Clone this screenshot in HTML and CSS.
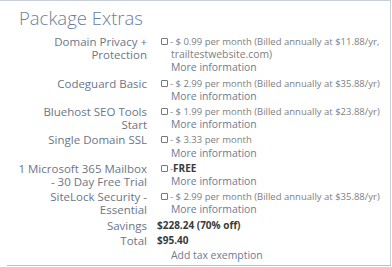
FILE: index.html
```html
<!DOCTYPE html>
<html lang="en">

<head>
    <meta charset="UTF-8" />
    <title>Package Extras</title>
    <link rel="stylesheet" href="styles.css">
</head>

<body>
    <div class="panel">
        <h2>Package Extras</h2>

        <div class="extras">
            <div class="label">Domain Privacy +<br>Protection</div>
            <div class="value">
                <span class="box"></span>- $ 0.99 per month (Billed annually at $11.88/yr,
                <div class="sub">trailtestwebsite.com)</div>
                <a class="sub more" href="#">More information</a>
            </div>

            <div class="label">Codeguard Basic</div>
            <div class="value">
                <span class="box"></span>- $ 2.99 per month (Billed annually at $35.88/yr)
                <a class="sub more" href="#">More information</a>
            </div>

            <div class="label">Bluehost SEO Tools<br>Start</div>
            <div class="value">
                <span class="box"></span>- $ 1.99 per month (Billed annually at $23.88/yr)
                <a class="sub more" href="#">More information</a>
            </div>

            <div class="label">Single Domain SSL</div>
            <div class="value">
                <span class="box"></span>- $ 3.33 per month
                <a class="sub more" href="#">More information</a>
            </div>

            <div class="label">1 Microsoft 365 Mailbox<br>- 30 Day Free Trial</div>
            <div class="value">
                <span class="box"></span>-<b class="free">FREE</b>
                <a class="sub more" href="#">More information</a>
            </div>

            <div class="label">SiteLock Security -<br>Essential</div>
            <div class="value">
                <span class="box"></span>- $ 2.99 per month (Billed annually at $35.88/yr)
                <a class="sub more" href="#">More information</a>
            </div>

            <div class="label">Savings</div>
            <div class="value"><b class="sum">$228.24 (70% off)</b></div>

            <div class="label">Total</div>
            <div class="value"><b class="sum">$95.40</b></div>

            <div class="label"></div>
            <div class="value"><a class="sub more" href="#">Add tax exemption</a></div>
        </div>
    </div>
</body>
</html>
```

FILE: styles.css
```css
/* Page */
body {
    margin: 0;
    font-family: 'Open Sans', 'Liberation Sans', sans-serif;
    background: white;
}

/* Panel with thin borders */
.panel {
    width: 391px;
    height: 266px;
    border-top: 1px solid #c9cfd8;
    border-right: 1px solid #c9cfd8;
    box-sizing: border-box;
    position: relative;
}

.panel::after {
    content: "";
    position: absolute;
    left: 7px;
    right: -1px;
    bottom: 0;
    border-bottom: 1px solid #b7c0cc;
}

/* Title */
h2 {
    margin: 0;
    padding: 5px 0 0 19px;
    font-size: 18.5px;
    font-weight: 300;
    color: #6a7f9c;
    line-height: 24px;
}

/* Two column grid */
.extras {
    display: grid;
    grid-template-columns: 140px 1fr;
    column-gap: 10px;
    row-gap: 2px;
    margin: 5px 0 0 7px;
    line-height: 13.2px;
}

.label {
    text-align: right;
    font-size: 11.5px;
    color: #6b7686;
}

.value {
    font-size: 9.5px;
    color: #808080;
}

.value b {
    color: #3a3a3a;
    font-weight: bold;
}

.free {
    font-size: 10px;
}

.sum {
    font-size: 10px;
}

/* Little checkbox */
.box {
    display: inline-block;
    width: 5px;
    height: 5px;
    border: 1px solid #777;
    border-radius: 1px;
    margin: 0 2px 0 4px;
    vertical-align: 0;
}

.sub {
    display: block;
    padding-left: 14px;
    font-size: 10.4px;
}

.more {
    color: #6c7c92;
    text-decoration: none;
}
```
